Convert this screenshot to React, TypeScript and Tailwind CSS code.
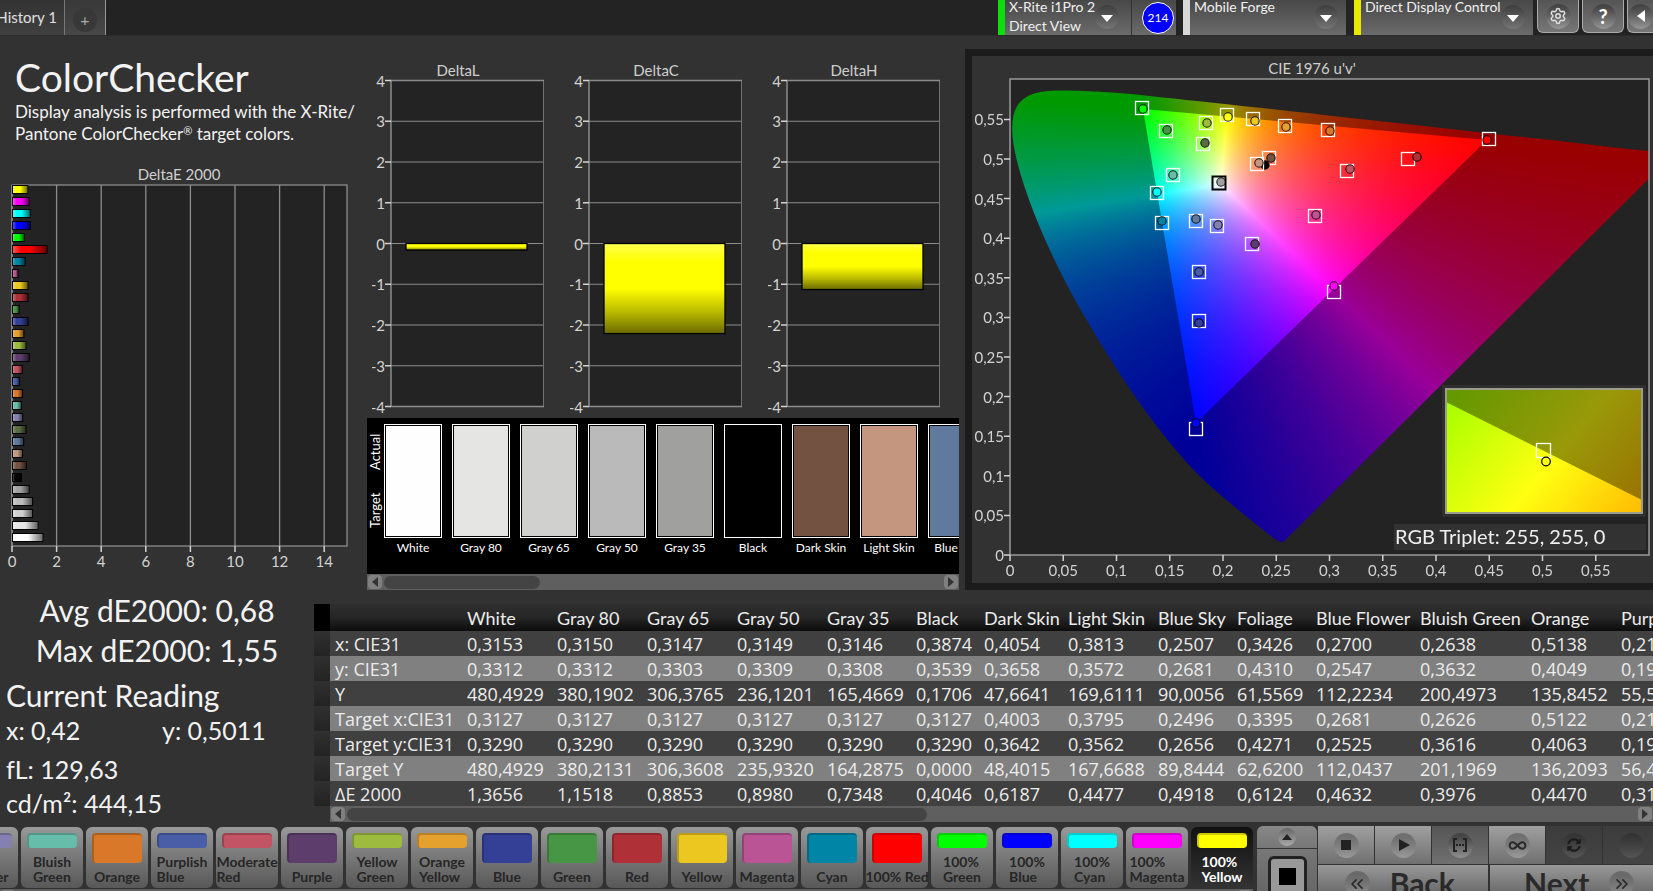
import React, { useEffect, useRef } from "react";
import { ChevronsLeft, ChevronsRight, Infinity as InfinityIcon, Settings } from "lucide-react";
import { FaSyncAlt } from "react-icons/fa";

interface BarProps {
  value: number;
  color: string;
}

interface PatchProps {
  label: string;
  color: string;
}

interface MarkerProps {
  // square = target, circle = measured
  target?: number[];
  actual: number[];
  color: string;
  stroke?: string;
}

const deltaEBars: BarProps[] = [
  { value: 0.69, color: "#ffff00" },
  { value: 0.75, color: "#ff00ff" },
  { value: 0.8, color: "#00ffff" },
  { value: 0.8, color: "#0000ff" },
  { value: 0.53, color: "#00ff00" },
  { value: 1.55, color: "#ff0000" },
  { value: 0.57, color: "#0085a6" },
  { value: 0.25, color: "#ba5495" },
  { value: 0.7, color: "#ebc71f" },
  { value: 0.7, color: "#b03038" },
  { value: 0.3, color: "#469646" },
  { value: 0.7, color: "#343f96" },
  { value: 0.51, color: "#e5a12d" },
  { value: 0.61, color: "#9dbc3f" },
  { value: 0.75, color: "#5d3d6b" },
  { value: 0.44, color: "#c35463" },
  { value: 0.31, color: "#4a5ea8" },
  { value: 0.45, color: "#d87828" },
  { value: 0.4, color: "#66bda9" },
  { value: 0.46, color: "#8481b1" },
  { value: 0.61, color: "#596c42" },
  { value: 0.5, color: "#5f7a9c" },
  { value: 0.45, color: "#c49680" },
  { value: 0.62, color: "#735242" },
  { value: 0.4, color: "#050505" },
  { value: 0.75, color: "#a0a0a0" },
  { value: 0.9, color: "#bababa" },
  { value: 0.9, color: "#d0d0d0" },
  { value: 1.15, color: "#e5e5e5" },
  { value: 1.37, color: "#ffffff" },
];

const swatches: PatchProps[] = [
  { label: "White", color: "#fefefe" },
  { label: "Gray 80", color: "#e5e5e4" },
  { label: "Gray 65", color: "#d0d0cf" },
  { label: "Gray 50", color: "#bababa" },
  { label: "Gray 35", color: "#a0a09f" },
  { label: "Black", color: "#000000" },
  { label: "Dark Skin", color: "#735242" },
  { label: "Light Skin", color: "#c49680" },
  { label: "Blue Sky", color: "#5f7a9c" },
];

const patches: PatchProps[] = [
  { label: "Blue Flower", color: "#8481b1" },
  { label: "Bluish Green", color: "#66bda9" },
  { label: "Orange", color: "#d87828" },
  { label: "Purplish Blue", color: "#4a5ea8" },
  { label: "Moderate Red", color: "#c35463" },
  { label: "Purple", color: "#5d3d6b" },
  { label: "Yellow Green", color: "#9dbc3f" },
  { label: "Orange Yellow", color: "#e5a12d" },
  { label: "Blue", color: "#343f96" },
  { label: "Green", color: "#469646" },
  { label: "Red", color: "#b03038" },
  { label: "Yellow", color: "#ebc71f" },
  { label: "Magenta", color: "#ba5495" },
  { label: "Cyan", color: "#0085a6" },
  { label: "100% Red", color: "#ff0000" },
  { label: "100% Green", color: "#00ff00" },
  { label: "100% Blue", color: "#0000ff" },
  { label: "100% Cyan", color: "#00ffff" },
  { label: "100% Magenta", color: "#ff00ff" },
  { label: "100% Yellow", color: "#ffff00" },
];

const columns = [
  { header: "White", className: "w-[90px]" },
  { header: "Gray 80", className: "w-[90px]" },
  { header: "Gray 65", className: "w-[90px]" },
  { header: "Gray 50", className: "w-[90px]" },
  { header: "Gray 35", className: "w-[89px]" },
  { header: "Black", className: "w-[68px]" },
  { header: "Dark Skin", className: "w-[84px]" },
  { header: "Light Skin", className: "w-[90px]" },
  { header: "Blue Sky", className: "w-[79px]" },
  { header: "Foliage", className: "w-[79px]" },
  { header: "Blue Flower", className: "w-[104px]" },
  { header: "Bluish Green", className: "w-[111px]" },
  { header: "Orange", className: "w-[90px]" },
  { header: "Purplish Blue", className: "w-[111px]" },
];

const rows = [
  {
    label: "x: CIE31",
    cells: ["0,3153", "0,3150", "0,3147", "0,3149", "0,3146", "0,3874", "0,4054", "0,3813", "0,2507", "0,3426", "0,2700", "0,2638", "0,5138", "0,2152"],
  },
  {
    label: "y: CIE31",
    cells: ["0,3312", "0,3312", "0,3303", "0,3309", "0,3308", "0,3539", "0,3658", "0,3572", "0,2681", "0,4310", "0,2547", "0,3632", "0,4049", "0,1938"],
  },
  {
    label: "Y",
    cells: ["480,4929", "380,1902", "306,3765", "236,1201", "165,4669", "0,1706", "47,6641", "169,6111", "90,0056", "61,5569", "112,2234", "200,4973", "135,8452", "55,5120"],
  },
  {
    label: "Target x:CIE31",
    cells: ["0,3127", "0,3127", "0,3127", "0,3127", "0,3127", "0,3127", "0,4003", "0,3795", "0,2496", "0,3395", "0,2681", "0,2626", "0,5122", "0,2141"],
  },
  {
    label: "Target y:CIE31",
    cells: ["0,3290", "0,3290", "0,3290", "0,3290", "0,3290", "0,3290", "0,3642", "0,3562", "0,2656", "0,4271", "0,2525", "0,3616", "0,4063", "0,1920"],
  },
  {
    label: "Target Y",
    cells: ["480,4929", "380,2131", "306,3608", "235,9320", "164,2875", "0,0000", "48,4015", "167,6688", "89,8444", "62,6200", "112,0437", "201,1969", "136,2093", "56,4310"],
  },
  {
    label: "ΔE 2000",
    cells: ["1,3656", "1,1518", "0,8853", "0,8980", "0,7348", "0,4046", "0,6187", "0,4477", "0,4918", "0,6124", "0,4632", "0,3976", "0,4470", "0,3125"],
  },
];

// marker positions in chart coordinates
const markers: MarkerProps[] = [
  { target: [170, 52], actual: [171, 53], color: "#00ff00" },
  { target: [194, 75], actual: [195, 74], color: "#469646" },
  { target: [234, 67], actual: [235, 67], color: "#9dbc3f" },
  { target: [255, 59], actual: [256, 61], color: "#ffff00" },
  { target: [231, 88], actual: [233, 87], color: "#596c42" },
  { target: [281, 63], actual: [283, 65], color: "#ebc71f" },
  { target: [313, 70], actual: [314, 71], color: "#e5a12d" },
  { target: [356, 74], actual: [358, 75], color: "#d87828" },
  { target: [297, 102], actual: [299, 102], color: "#735242" },
  { actual: [293, 109], color: "#000000" },
  { target: [285, 108], actual: [287, 107], color: "#c49680" },
  { target: [247, 127], actual: [249, 126], color: "#a0a0a0", stroke: "#000000" },
  { target: [201, 119], actual: [201, 119], color: "#66bda9" },
  { target: [185, 137], actual: [185, 136], color: "#00ffff" },
  { target: [190, 167], actual: [190, 165], color: "#0085a6" },
  { target: [224, 165], actual: [224, 163], color: "#5f7a9c" },
  { target: [245, 170], actual: [246, 169], color: "#8481b1" },
  { target: [280, 188], actual: [283, 188], color: "#5d3d6b" },
  { target: [227, 216], actual: [227, 216], color: "#4a5ea8" },
  { target: [227, 265], actual: [227, 267], color: "#343f96" },
  { target: [517, 83], actual: [515, 84], color: "#ff0000" },
  { target: [436, 103], actual: [445, 101], color: "#b03038" },
  { target: [375, 115], actual: [378, 113], color: "#c35463" },
  { target: [343, 160], actual: [344, 159], color: "#ba5495" },
  { target: [362, 236], actual: [362, 230], color: "#ff00ff" },
  { target: [224, 373], actual: [224, 367], color: "#0000ff" },
];

// spectral locus, CIE 1931 x,y
const locus = [
  [0.1741, 0.005], [0.1733, 0.0048], [0.1714, 0.0051], [0.1689, 0.0069],
  [0.1644, 0.0109], [0.1566, 0.0177], [0.144, 0.0297], [0.1355, 0.0399],
  [0.1241, 0.0578], [0.1096, 0.0868], [0.0913, 0.1327], [0.0687, 0.2007],
  [0.0454, 0.295], [0.0235, 0.4127], [0.0082, 0.5384], [0.0039, 0.6548],
  [0.0139, 0.7502], [0.0389, 0.812], [0.0743, 0.8338], [0.1142, 0.8262],
  [0.1547, 0.8059], [0.2296, 0.7543], [0.3016, 0.6923], [0.3731, 0.6245],
  [0.4441, 0.5547], [0.5125, 0.4866], [0.5752, 0.4242], [0.627, 0.3725],
  [0.6658, 0.334], [0.6915, 0.3083], [0.719, 0.2809], [0.7347, 0.2653],
];

const PLOT = { left: 38, top: 23, width: 639, height: 476 };
const U_SCALE = 1065;
const V_SCALE = 792;

const toAxis = (value: number) => String(value).replace(".", ",");

const uvToRgb = (u: number, v: number) => {
  const X = (9 * u) / (4 * v);
  const Z = (12 - 3 * u - 20 * v) / (4 * v);
  const rgb = [
    3.2406 * X - 1.5372 - 0.4986 * Z,
    -0.9689 * X + 1.8758 + 0.0415 * Z,
    0.0557 * X - 0.204 + 1.057 * Z,
  ].map((c) => Math.max(0, c));
  const max = Math.max(...rgb);
  return rgb.map((c) => (255 * c) / max);
};

const GamutCanvas = () => {
  const ref = useRef<HTMLCanvasElement>(null);

  useEffect(() => {
    const ctx = ref.current?.getContext("2d");
    if (!ctx) return;
    const { width, height } = PLOT;
    const image = ctx.createImageData(width, height);
    for (let y = 0; y < height; y++) {
      for (let x = 0; x < width; x++) {
        const [r, g, b] = uvToRgb((x + 0.5) / U_SCALE, (height - y - 0.5) / V_SCALE);
        const i = (y * width + x) * 4;
        image.data[i] = r;
        image.data[i + 1] = g;
        image.data[i + 2] = b;
        image.data[i + 3] = 255;
      }
    }
    ctx.putImageData(image, 0, 0);

    // darken everything outside the measured gamut
    ctx.fillStyle = "rgba(0,0,0,0.4)";
    ctx.beginPath();
    ctx.rect(0, 0, width, height);
    ctx.moveTo(133, 30);
    ctx.lineTo(477, 61);
    ctx.lineTo(186, 344);
    ctx.closePath();
    ctx.fill("evenodd");

    // keep only what lies within the locus
    ctx.globalCompositeOperation = "destination-in";
    ctx.fillStyle = "#000";
    ctx.beginPath();
    const points = locus.map(([x, y]) => {
      const d = -2 * x + 12 * y + 3;
      return [((4 * x) / d) * U_SCALE, height - ((9 * y) / d) * V_SCALE];
    });
    ctx.moveTo(points[0][0], points[0][1]);
    for (let i = 1; i < points.length - 1; i++) {
      const [px, py] = points[i];
      const [nx, ny] = points[i + 1];
      ctx.quadraticCurveTo(px, py, (px + nx) / 2, (py + ny) / 2);
    }
    const last = points[points.length - 1];
    ctx.lineTo(last[0], last[1]);
    ctx.closePath();
    ctx.fill();
    ctx.globalCompositeOperation = "source-over";
  }, []);

  return <canvas ref={ref} width={PLOT.width} height={PLOT.height} className="block" />;
};

const CieChart = () => {
  const bottom = PLOT.top + PLOT.height;
  const ticks = Array.from({ length: 12 }, (_, i) => Number((i * 0.05).toFixed(2)));

  return (
    <svg viewBox="0 0 681 527" className="w-full block" role="img" aria-label="CIE 1976 u'v'">
      <defs>
        <linearGradient id="zoomFill" gradientUnits="userSpaceOnUse" x1="474" y1="350" x2="654" y2="500">
          <stop offset="0" stopColor="#a8ff00" />
          <stop offset="0.5" stopColor="#ffff10" />
          <stop offset="1" stopColor="#ffb000" />
        </linearGradient>
      </defs>
      <text x="340" y="18" textAnchor="middle" fontSize="15" fill="#cfcfcf">
        CIE 1976 u'v'
      </text>
      <rect x={PLOT.left} y={PLOT.top} width={PLOT.width} height={PLOT.height} fill="#232323" />
      <foreignObject x={PLOT.left} y={PLOT.top} width={PLOT.width} height={PLOT.height}>
        <GamutCanvas />
      </foreignObject>
      <rect x={PLOT.left} y={PLOT.top} width={PLOT.width} height={PLOT.height} fill="none" stroke="#9a9a9a" strokeWidth="1.5" />
      {ticks.map((tick) => {
        const x = PLOT.left + tick * U_SCALE;
        const y = bottom - tick * V_SCALE;
        return (
          <g key={tick} fill="#d2d2d2" stroke="none" fontSize="15">
            <path d={`M${x} ${bottom}v6M${PLOT.left} ${y}h-6`} stroke="#d2d2d2" strokeWidth="1.5" />
            <text x={x} y={bottom + 21} textAnchor="middle">{toAxis(tick)}</text>
            <text x={PLOT.left - 6} y={y + 6} textAnchor="end">{toAxis(tick)}</text>
          </g>
        );
      })}
      {markers.map(({ target, actual, color, stroke }, index) => (
        <g key={index}>
          {target && (
            <rect x={target[0] - 6.5} y={target[1] - 6.5} width="13" height="13" fill="none" stroke={stroke ?? "#ffffff"} strokeWidth={stroke ? 2 : 1.3} />
          )}
          <circle cx={actual[0]} cy={actual[1]} r="4.2" fill={color} stroke="#000000" strokeOpacity="0.85" strokeWidth="1.1" />
        </g>
      ))}
      {/* zoomed view around the current color */}
      <rect x="470" y="329" width="204" height="132" fill="#2f2f2f" />
      <rect x="474" y="333" width="196" height="124" fill="url(#zoomFill)" />
      <path d="M474 346L670 444V333H474Z" fill="#000" fillOpacity="0.4" />
      <rect x="474" y="333" width="196" height="124" fill="none" stroke="#9d9d8c" strokeWidth="2" />
      <rect x="564.5" y="387.5" width="14" height="14" fill="none" stroke="#fff" strokeWidth="1.3" />
      <circle cx="574" cy="405.5" r="4.3" fill="none" stroke="#000" strokeWidth="1.2" />
      <rect x="422" y="468" width="252" height="26" fill="#323232" />
      <text x="423" y="488" fontSize="20" fill="#f0f0f0">RGB Triplet: 255, 255, 0</text>
    </svg>
  );
};

const DeltaEChart = () => (
  <svg viewBox="0 0 367 410" className="w-full block" role="img" aria-label="DeltaE 2000">
    <defs>
      <linearGradient id="barShade">
        <stop offset="0" stopColor="#fff" stopOpacity="0.35" />
        <stop offset="0.25" stopColor="#fff" stopOpacity="0" />
        <stop offset="0.5" stopColor="#000" stopOpacity="0" />
        <stop offset="1" stopColor="#000" stopOpacity="0.6" />
      </linearGradient>
    </defs>
    <text x="179" y="15" textAnchor="middle" fontSize="15" fill="#cfcfcf">DeltaE 2000</text>
    <rect x="12" y="20" width="335" height="361" fill="#232323" stroke="#8c8c8c" strokeWidth="1.3" />
    {[0, 2, 4, 6, 8, 10, 12, 14].map((tick) => {
      const x = 12 + tick * 22.3;
      return (
        <g key={tick}>
          <path d={`M${x} 20V381`} stroke="#8c8c8c" strokeWidth="1.3" />
          <path d={`M${x} 381v6`} stroke="#d2d2d2" strokeWidth="1.5" />
          <text x={x} y="402" textAnchor="middle" fontSize="15" fill="#d2d2d2">{tick}</text>
        </g>
      );
    })}
    {deltaEBars.map(({ value, color }, index) => (
      <g key={index}>
        <rect x="12.5" y={20.5 + index * 12} width={value * 22.3} height="8" fill={color} />
        <rect x="12.5" y={20.5 + index * 12} width={value * 22.3} height="8" fill="url(#barShade)" stroke="#000" />
      </g>
    ))}
  </svg>
);

const DeltaChart = ({ title, value }: { title: string; value: number }) => (
  <svg viewBox="0 0 172 356" className="w-[172px]" role="img" aria-label={title}>
    <defs>
      <linearGradient id={title} x2="0" y2="1">
        <stop offset="0" stopColor="#ffff50" />
        <stop offset="0.2" stopColor="#ffff00" />
        <stop offset="0.5" stopColor="#ffff00" />
        <stop offset="0.78" stopColor="#b4b400" />
        <stop offset="1" stopColor="#6a6a00" />
      </linearGradient>
    </defs>
    <text x="86" y="15" textAnchor="middle" fontSize="15" fill="#cfcfcf">{title}</text>
    <rect x="19" y="20" width="153" height="326" fill="#232323" stroke="#8c8c8c" strokeWidth="1.5" />
    {[4, 3, 2, 1, 0, -1, -2, -3, -4].map((tick, index) => {
      const y = 20 + index * 40.75;
      return (
        <g key={tick}>
          <path d={`M19 ${y}h152`} stroke="#8c8c8c" strokeWidth="1.2" />
          <path d={`M19 ${y}h-6`} stroke="#d2d2d2" strokeWidth="1.5" />
          <text x="13" y={y + 6} textAnchor="end" fontSize="15" fill="#d2d2d2">{tick}</text>
        </g>
      );
    })}
    <rect x="34" y="183" width="121" height={-value * 40.75} fill={`url(#${title})`} stroke="#000" strokeWidth="1.3" />
  </svg>
);

const ScrollBar = ({ thumb }: { thumb: string }) => (
  <div className="h-4 flex items-center bg-[#5f5f5f]">
    <button aria-label="Scroll left" className="w-[14px] h-[14px] ml-px rounded-sm bg-[#808080] flex items-center justify-center shrink-0">
      <svg viewBox="0 0 6 10" className="w-[6px] h-[10px]"><path d="M6 0v10L0 5z" fill="#333" /></svg>
    </button>
    <div className="flex-1 h-[13px] mx-[2px]">
      <div className={`h-full rounded-full bg-[#444] ${thumb}`} />
    </div>
    <button aria-label="Scroll right" className="w-[14px] h-[14px] mr-px rounded-sm bg-[#808080] flex items-center justify-center shrink-0">
      <svg viewBox="0 0 6 10" className="w-[6px] h-[10px]"><path d="M0 0v10l6-5z" fill="#333" /></svg>
    </button>
  </div>
);

const DropDown = ({ lines, accent, className }: { lines: string[]; accent: string; className: string }) => (
  <button className={`h-[35px] flex text-left bg-linear-to-b from-[#484848] to-[#6b6b6b] text-[#f0f0f0] ${className}`}>
    <span className={`w-[7px] h-full shrink-0 ${accent}`} />
    <span className="flex-1 pl-1 -mt-[3px] text-[14px] leading-[19px] whitespace-nowrap">
      {lines.map((line) => (
        <span key={line} className="block">{line}</span>
      ))}
    </span>
    <span className="w-6 h-6 mt-[5px] mr-2 rounded-full bg-linear-to-b from-[#3e3e3e] to-[#757575] flex items-center justify-center shrink-0">
      <svg viewBox="0 0 12 7" className="w-3 h-[7px] mt-[2px]"><path d="M0 0h12L6 7z" fill="#fff" /></svg>
    </span>
  </button>
);

const RoundIcon = ({ children, faint }: { children?: React.ReactNode; faint?: boolean }) => (
  <span
    className={`w-[25px] h-[25px] rounded-full flex items-center justify-center shrink-0 ${
      faint ? "bg-linear-to-b from-black/15 to-white/10" : "bg-linear-to-b from-black/25 to-white/25"
    }`}
  >
    {children}
  </span>
);

const Header = () => (
  <header className="h-9 flex items-start bg-[#232323] border-b border-[#2b2b2b]">
    <button className="h-[35px] w-[65px] pr-[7px] text-right text-[15px] text-[#e0e0e0] whitespace-nowrap bg-linear-to-b from-[#333] to-[#404040] border-r border-[#777] flex justify-end items-center">
      History 1
    </button>
    <button aria-label="Add tab" className="h-[35px] w-[41px] bg-linear-to-b from-[#383838] to-[#484848] border-r border-[#999] flex justify-center items-center">
      <span className="w-6 h-6 mt-1 rounded-full bg-[#383838] text-[#aaa] text-[16px] leading-6">+</span>
    </button>
    <div className="ml-auto flex">
      <DropDown lines={["X-Rite i1Pro 2", "Direct View"]} accent="bg-[#0be00b]" className="w-[133px] pr-1" />
      <div className="w-[45px] h-[35px] pl-2 border-l border-[#333] bg-linear-to-b from-[#484848] to-[#6b6b6b] flex items-center justify-center mr-[7px]">
        <span className="w-8 h-8 rounded-full bg-[#0000ff] border border-white text-white text-[12px] flex items-center justify-center">214</span>
      </div>
      <DropDown lines={["Mobile Forge"]} accent="bg-[#d8d8d8]" className="w-[163px] mr-2" />
      <DropDown lines={["Direct Display Control"]} accent="bg-[#e8e800]" className="w-[179px] mr-1" />
      <button aria-label="Settings" className="w-[42px] h-[33px] mr-[3px] rounded-b-md border border-t-0 border-[#aaa] bg-linear-to-b from-[#555] to-[#777] flex items-center justify-center text-[#ddd]">
        <RoundIcon><Settings size={18} strokeWidth={2} /></RoundIcon>
      </button>
      <button aria-label="Help" className="w-[42px] h-[33px] mr-[3px] rounded-b-md border border-t-0 border-[#aaa] bg-linear-to-b from-[#555] to-[#777] flex items-center justify-center text-[20px] font-bold text-white">
        <RoundIcon>?</RoundIcon>
      </button>
      <button aria-label="Collapse" className="w-[26px] h-[33px] rounded-bl-md border border-t-0 border-r-0 border-[#aaa] bg-linear-to-b from-[#555] to-[#777] flex items-center justify-end overflow-hidden">
        <RoundIcon>
          <svg viewBox="0 0 8 12" className="w-2 h-3"><path d="M8 0v12L0 6z" fill="#fff" /></svg>
        </RoundIcon>
      </button>
    </div>
  </header>
);

const SwatchPanel = () => (
  <div className="bg-black overflow-hidden">
    <div className="h-[156px] pt-[6px] flex">
      <div className="w-[17px] h-[114px] shrink-0 flex flex-col text-white text-[13px] leading-[17px]">
        <span className="flex-1 text-center rotate-180 [writing-mode:vertical-rl] pt-1">Actual</span>
        <span className="flex-1 text-center rotate-180 [writing-mode:vertical-rl]">Target</span>
      </div>
      <div className="flex gap-[10px] min-w-0 overflow-hidden">
        {swatches.map(({ label, color }) => (
          <div key={label} className="w-[58px] shrink-0">
            <div className="h-[114px] border border-white p-px">
              <div className="h-full" style={{ backgroundColor: color }} />
            </div>
            <p className="text-center text-[12px] leading-5 text-white whitespace-nowrap">{label}</p>
          </div>
        ))}
      </div>
    </div>
    <ScrollBar thumb="w-[28%]" />
  </div>
);

const Readings = () => (
  <section className="w-[314px] shrink-0 text-[#f2f2f2] whitespace-nowrap">
    <div className="text-center text-[30px] leading-10 -mt-[14px]">
      <p>Avg dE2000: 0,68</p>
      <p>Max dE2000: 1,55</p>
    </div>
    <div className="pl-[6px]">
      <h2 className="text-[30px] leading-[34px] mt-2">Current Reading</h2>
      <div className="flex text-[25px] leading-9">
        <p className="w-[156px]">x: 0,42</p>
        <p>y: 0,5011</p>
      </div>
      <p className="text-[25px] leading-[34px] mt-1">fL: 129,63</p>
      <p className="text-[25px] leading-[34px]">cd/m²: 444,15</p>
    </div>
  </section>
);

const ResultsTable = () => (
  <section className="flex-1 min-w-0 overflow-hidden">
    <table className="w-[1412px] table-fixed border-collapse text-left text-[#ececec] whitespace-nowrap">
      <thead>
        <tr className="h-[27px] bg-linear-to-b from-[#2e2e2e] via-[#262626] via-50% to-[#0c0c0c] text-[18px] leading-6">
          <th className="w-4 bg-black" />
          <th className="w-[132px]" />
          {columns.map(({ header, className }) => (
            <th key={header} className={`pl-[5px] font-normal ${className}`}>{header}</th>
          ))}
        </tr>
      </thead>
      <tbody>
        {rows.map(({ label, cells }) => (
          <tr key={label} className="h-[25px] bg-[#404040] even:bg-[#808080] font-['Open_Sans'] text-[18px] leading-6">
            <td className="bg-linear-to-b from-[#303030] to-[#232323]" />
            <th scope="row" className="pl-[5px] font-normal">{label}</th>
            {cells.map((cell, index) => (
              <td key={index} className="pl-[5px]">{cell}</td>
            ))}
          </tr>
        ))}
      </tbody>
    </table>
    <div className="pl-4">
      <ScrollBar thumb="w-[45%]" />
    </div>
  </section>
);

const PatchButton = ({ label, color }: PatchProps) => {
  const words = label.split(" ");
  const selected = label === "100% Yellow";
  const twoLines = words.length > 1 && label !== "100% Red";
  return (
    <button
      className={`w-[62px] h-[61px] shrink-0 rounded-md pt-[6px] flex flex-col items-center justify-between font-bold text-[14px] leading-[15px] pb-1 whitespace-nowrap ${
        selected
          ? "bg-linear-to-b from-[#111] to-[#333] text-white"
          : "bg-linear-to-b from-[#999] to-[#585858] text-[#262626]"
      }`}
    >
      <span
        className={`w-[50px] rounded-[4px] border-t-2 border-l-2 border-black/20 ${twoLines ? "h-[15px]" : "h-[30px]"}`}
        style={{ backgroundColor: color }}
      />
      <span className="text-left">
        {twoLines ? words.map((word) => <span key={word} className="block">{word}</span>) : label}
      </span>
    </button>
  );
};

const light = "bg-linear-to-b from-[#a0a0a0] to-[#707070]";
const dim = "bg-linear-to-b from-[#555] to-[#707070]";
const dark = "bg-linear-to-b from-[#3c3c3c] to-[#444]";

const Transport = () => {
  const buttons = [
    { name: "Stop", tone: light, icon: <span className="w-[10px] h-[10px] bg-[#222]" /> },
    { name: "Play", tone: light, icon: <svg viewBox="0 0 11 12" className="w-[11px] h-3 ml-[2px]"><path d="M0 0v12l11-6z" fill="#222" /></svg> },
    {
      name: "Range",
      tone: dim,
      icon: (
        <svg viewBox="0 0 16 14" className="w-4 h-[14px]" fill="none" stroke="#222" strokeWidth="2">
          <path d="M5 1H2v12h3M11 1h3v12h-3M4 7h2M7 7h2M10 7h2" />
        </svg>
      ),
    },
    { name: "Loop", tone: light, icon: <InfinityIcon size={19} strokeWidth={2.5} /> },
    { name: "Refresh", tone: dark, icon: <FaSyncAlt size={14} color="#1c1c1c" /> },
    { name: "Record", tone: dark, icon: null },
  ];
  return (
    <div className="w-[335px] shrink-0 text-[#2a2a2a]">
      <div className="w-[341px] grid grid-cols-6 gap-px">
        {buttons.map(({ name, tone, icon }) => (
          <button key={name} aria-label={name} className={`h-[38px] flex items-center justify-center ${tone}`}>
            <RoundIcon faint={tone === dark}>{icon}</RoundIcon>
          </button>
        ))}
      </div>
      <div className="w-[341px] grid grid-cols-2 gap-[2px] mt-px text-[30px] font-bold leading-9">
        <button className="h-[42px] flex items-start justify-center gap-5 pr-[6px] bg-linear-to-b from-[#999] to-[#555]">
          <span className="mt-[6px] flex"><RoundIcon><ChevronsLeft size={20} /></RoundIcon></span>
          Back
        </button>
        <button className="h-[42px] flex items-start justify-center gap-5 pl-[10px] bg-linear-to-b from-[#999] to-[#555]">
          Next
          <span className="mt-[6px] flex"><RoundIcon><ChevronsRight size={20} /></RoundIcon></span>
        </button>
      </div>
    </div>
  );
};

const Footer = () => (
  <footer className="flex-1 min-h-0 mt-1 flex">
    <div className="flex-1 min-w-0 mr-1 overflow-hidden">
      <div className="flex justify-end gap-[3px] pt-px pb-px">
        {patches.map((patch) => (
          <PatchButton key={patch.label} {...patch} />
        ))}
      </div>
      <ScrollBar thumb="w-[64%] ml-auto" />
    </div>
    <div className="w-[60px] mr-px shrink-0 rounded-t-md overflow-hidden">
      <button aria-label="Expand" className="w-full h-[23px] flex items-center justify-center bg-linear-to-b from-[#888] to-[#777] border-b border-[#333]">
        <span className="w-[18px] h-[18px] rounded-full bg-linear-to-b from-[#666] to-[#aaa] flex items-center justify-center">
          <svg viewBox="0 0 10 6" className="w-[10px] h-[6px]"><path d="M0 6h10L5 0z" fill="#222" /></svg>
        </span>
      </button>
      <div className="h-[60px] pt-[7px] flex justify-center bg-linear-to-b from-[#777] to-[#606060]">
        <div className="w-[39px] h-[50px] pt-[9px] rounded-md border-[3px] border-[#222] bg-[#999] flex justify-center">
          <div className="w-[17px] h-[17px] bg-black" />
        </div>
      </div>
    </div>
    <Transport />
  </footer>
);

const App = () => {
  return (
    <div className="h-screen overflow-hidden flex flex-col bg-[#323232] font-['Lato',sans-serif]">
      <Header />
      <main className="shrink-0">
        <div className="flex h-[568px]">
          <section className="w-[367px] shrink-0">
            <div className="pl-[15px] pt-[17px] text-[#f2f2f2] whitespace-nowrap">
              <h1 className="text-[39px] leading-[48px]">ColorChecker</h1>
              <p className="text-[17px] leading-[22px]">
                Display analysis is performed with the X-Rite/
                <br />
                Pantone ColorChecker<sup className="text-[11px]">®</sup> target colors.
              </p>
            </div>
            <div className="mt-[20px]">
              <DeltaEChart />
            </div>
          </section>
          <section className="w-[592px] shrink-0 mr-[6px]">
            <div className="flex gap-[26px] pl-[5px] pt-[23px] h-[382px]">
              <DeltaChart title="DeltaL" value={-0.16} />
              <DeltaChart title="DeltaC" value={-2.21} />
              <DeltaChart title="DeltaH" value={-1.13} />
            </div>
            <SwatchPanel />
          </section>
          <section className="flex-1 min-w-0 mt-[13px] self-start border-[7px] border-r-0 border-[#1b1b1b]">
            <CieChart />
          </section>
        </div>
        <div className="flex">
          <Readings />
          <ResultsTable />
        </div>
      </main>
      <Footer />
    </div>
  );
};

export default App;
